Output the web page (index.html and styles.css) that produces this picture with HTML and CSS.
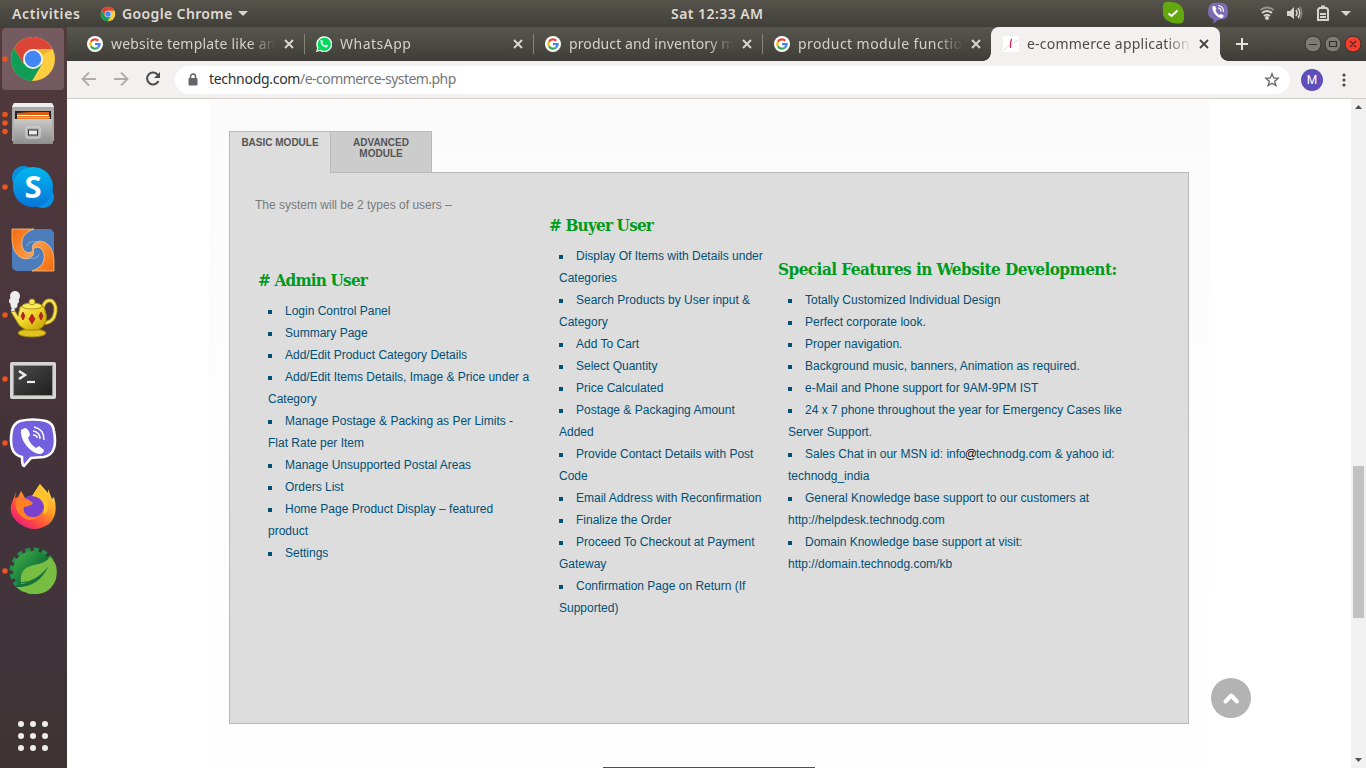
FILE: index.html
```html
<!DOCTYPE html>
<html lang="en">
<head>
<meta charset="utf-8">
<title>e-commerce application</title>
<link rel="stylesheet" href="styles.css">
</head>
<body>
<svg class="defs" width="0" height="0">
  <defs>
    <symbol id="google" viewBox="0 0 16 16">
      <circle cx="8" cy="8" r="8" fill="#fff"/>
      <g fill="none" stroke-width="2.3">
        <path d="M3.9 5.7A4.7 4.7 0 0 1 11.3 4.7" stroke="#ea4335"/>
        <path d="M3.9 10.3A4.7 4.7 0 0 1 3.9 5.7" stroke="#fbbc05"/>
        <path d="M3.9 10.3A4.7 4.7 0 0 0 11.1 11.5" stroke="#34a853"/>
        <path d="M8 8.1H12.6A4.7 4.7 0 0 1 11.1 11.5" stroke="#4285f4"/>
      </g>
    </symbol>
    <symbol id="chrome" viewBox="0 0 48 48">
      <circle cx="24" cy="24" r="22" fill="#ffcd40"/>
      <path d="M5 13A22 22 0 0 1 43.6 14H24L14 28Z" fill="#db4437"/>
      <path d="M5 13A22 22 0 0 0 23 46L33 29 24 34 14 28Z" fill="#0f9d58"/>
      <path d="M24 14H43.6L34 20Z" fill="#e8b72f"/>
      <circle cx="24" cy="24" r="10" fill="#f4f4f4"/>
      <circle cx="24" cy="24" r="8.2" fill="#4285f4"/>
    </symbol>
    <linearGradient id="steel" x1="0" y1="0" x2="0" y2="1"><stop offset="0" stop-color="#c9c9c9"/><stop offset="1" stop-color="#8e8e8e"/></linearGradient>
    <linearGradient id="sky" x1="0" y1="0" x2="0" y2="1"><stop offset="0" stop-color="#00b8f0"/><stop offset="1" stop-color="#0874d8"/></linearGradient>
    <linearGradient id="screen" x1="0" y1="0" x2="1" y2="1"><stop offset="0" stop-color="#4a4a4a"/><stop offset="1" stop-color="#202020"/></linearGradient>
    <linearGradient id="fire" x1="1" y1="0" x2=".2" y2="1"><stop offset="0" stop-color="#fff04a"/><stop offset=".45" stop-color="#ff9a26"/><stop offset=".75" stop-color="#ff4545"/><stop offset="1" stop-color="#e31587"/></linearGradient>
    <linearGradient id="leaf" x1="0" y1="0" x2="1" y2="1"><stop offset="0" stop-color="#45b649"/><stop offset=".6" stop-color="#0b6b38"/></linearGradient>
    <linearGradient id="gold" x1="0" y1="0" x2="1" y2="1"><stop offset="0" stop-color="#fff79a"/><stop offset=".5" stop-color="#f0d52a"/><stop offset="1" stop-color="#c09a00"/></linearGradient>
    <linearGradient id="orange" x1="0" y1="0" x2="1" y2="1"><stop offset="0" stop-color="#f26a0c"/><stop offset="1" stop-color="#ffa64d"/></linearGradient>
    <path id="arm" d="M12 10H34C25 13 21 19 22 26C23 34 30 36 33 31C36 37 28 43 20 38C14 34 12 26 12 20Z"/>
  </defs>
</svg>

<header class="topbar">
  <span class="activities">Activities</span>
  <svg class="app-icon" width="16" height="16"><use href="#chrome"/></svg>
  <span class="app-name">Google Chrome</span>
  <svg class="caret" width="10" height="5"><path d="M0 0H10L5 5Z" fill="#d6d4cf"/></svg>
  <span class="clock">Sat 12:33 AM</span>
  <svg class="tray" width="206" height="27" viewBox="1160 0 206 27">
    <path d="M1165 2Q1162 4 1163 10Q1162 18 1168 21Q1173 24 1179 23.500Q1184 24 1184 18Q1185 10 1180 5Q1174 1 1165 2Z" fill="#64a80f"/>
    <path d="M1168.500 13.500L1171.500 16 1177.500 10.500" fill="none" stroke="#fff" stroke-width="2"/>
    <path d="M1213 3Q1218 2 1223 3Q1228 4 1228 12Q1228 18 1224 19L1218 20 1213.500 23.500V19Q1208 18 1208 12Q1208 4 1213 3Z" fill="#7b6db4"/>
    <path d="M1213 6C1211 8 1214 15 1220 18C1222 19 1225 16 1223 15L1221 14 1219 15Q1216 13 1215.500 10L1216.500 9 1215 6Z" fill="#fff"/>
    <path d="M1218 5.500Q1223.500 6 1223.500 12M1218 8Q1221 8 1221 11.500" fill="none" stroke="#fff" stroke-width="1.200"/>
    <g fill="none" stroke="#d6d4cf" stroke-width="2"><path d="M1260.500 10Q1267 5 1273.500 10" stroke="#96948e"/><path d="M1262 13Q1267 9 1272 13M1264 16Q1267 13.500 1270 16"/></g>
    <circle cx="1267" cy="18" r="2" fill="#d6d4cf"/>
    <path d="M1287 11H1290L1294 7V19L1290 16H1287Z" fill="#d6d4cf"/>
    <path d="M1296 10Q1298 13 1296 16M1298 8Q1301.500 13 1298 18" fill="none" stroke="#d6d4cf" stroke-width="1.500"/><path d="M1300 6.500Q1303.500 13 1300 19.500" fill="none" stroke="#8a8882" stroke-width="1.300"/>
    <path d="M1321 6.500H1325M1318 9.500L1319.500 8H1326.500L1328 9.500V20H1318Z" fill="none" stroke="#d6d4cf" stroke-width="2"/><path d="M1320 14H1326M1320 17H1326" stroke="#d6d4cf" stroke-width="2"/>
    <path d="M1341 11H1351L1346 16Z" fill="#d6d4cf"/>
  </svg>
</header>

<div class="desktop">
  <nav class="dock">
    <svg width="67" height="64"><rect x="2" y="1" width="62" height="62" rx="4" fill="#735b60"/><circle class="run" cx="5" cy="32" r="2.800"/><svg x="9" y="8" width="48" height="48"><use href="#chrome"/></svg></svg>
    <svg width="67" height="64">
      <circle class="run" cx="5" cy="23.500" r="2.800"/><circle class="run" cx="5" cy="32" r="2.800"/><circle class="run" cx="5" cy="40.500" r="2.800"/>
      <path d="M14 12H52L54 16V50H12V16Z" fill="#aaa"/><path d="M14 12H52L54 16H12Z" fill="#eee"/><rect x="15" y="20" width="36" height="8" fill="#222"/>
      <path d="M17 22L30 21 49 21V28H17Z" fill="#d95d13"/><path d="M17 24.500H49" stroke="#fff" stroke-width="1"/><path d="M17 26.500H50" stroke="#f6a039" stroke-width="2"/>
      <path d="M14 28H52L53 53H13Z" fill="url(#steel)"/><rect x="26" y="36" width="14" height="11" rx="1.500" fill="#b0b0b0" stroke="#ddd"/><rect x="28.500" y="39" width="9" height="5" fill="#eee" stroke="#333"/>
    </svg>
    <svg width="67" height="64"><circle class="run" cx="5" cy="32" r="2.800"/><circle cx="23.500" cy="22.500" r="11.500" fill="#078fd8"/><circle cx="43" cy="42" r="11" fill="#0790e0"/><circle cx="33" cy="32" r="20" fill="url(#sky)"/><text class="skype" x="33" y="43" text-anchor="middle">S</text></svg>
    <svg width="67" height="64"><rect x="12" y="10" width="42" height="42" rx="5" fill="#4c7cba"/><g fill="url(#orange)" stroke="#ffc184" stroke-width=".8"><use href="#arm"/><use href="#arm" transform="rotate(180 33 31)"/></g><path d="M27 27C28 22 35 21 38 25M39 35C38 40 31 41 28 37" fill="none" stroke="#8fb0d8" stroke-width="1"/></svg>
    <svg width="67" height="64"><circle class="run" cx="5" cy="32" r="2.800"/>
      <g fill="#eee"><circle cx="15" cy="13" r="5"/><circle cx="12" cy="18" r="3"/><circle cx="16" cy="18" r="3"/><circle cx="14" cy="22" r="3.500"/><circle cx="13" cy="27" r="2"/></g>
      <path d="M43 24Q45 16 52 18Q58 23 54 34Q51 40 43 40" fill="none" stroke="#ab8d09" stroke-width="4"/><path d="M43 24Q45 16 52 18Q58 23 54 34Q51 40 43 40" fill="none" stroke="#f3df52" stroke-width="2.500"/>
      <ellipse cx="32" cy="50" rx="14" ry="4" fill="#e2c21e" stroke="#9e8608"/><path d="M11 29L15 28 18 33 20 24Q32 17 44 24Q51 41 38 47H26Q18 43 16 37Z" fill="url(#gold)" stroke="#9e8608"/><ellipse cx="32" cy="23" rx="10" ry="3" fill="#f9ec62" stroke="#b39910"/><circle cx="32" cy="19" r="3" fill="#f7e658" stroke="#b39910"/>
      <path d="M32 31L35 36 32 41 29 36ZM23 29L25 33 23 37 21 33ZM41 29L43 33 41 37 39 33Z" fill="#c81b25" stroke="#831111" stroke-width=".6"/>
    </svg>
    <svg width="67" height="64"><circle class="run" cx="5" cy="32" r="2.800"/><rect x="10" y="15" width="46" height="37" rx="2" fill="#d5d5d3"/><rect x="13" y="18" width="40" height="31" fill="#989896"/><rect x="14" y="19" width="38" height="29" fill="url(#screen)"/><path d="M19 24L25 28 19 32" fill="none" stroke="#eee" stroke-width="2.500"/><path d="M27 35H35" stroke="#eee" stroke-width="2.200"/></svg>
    <svg width="67" height="64"><circle class="run" cx="5" cy="32" r="2.800"/><path d="M20 10Q33 7 46 10Q53 12 54 20Q56 31 54 37Q52 44 44 46L31 47 24 55Q22 55 22 46Q14 44 12 37Q10 29 12 19Q14 12 20 10Z" fill="#7360df" stroke="#fff" stroke-width="2.600"/><path d="M21 19L25 17Q29 18 30 24L28 27Q30 33 36 37L39 35 44 39Q44 42 40 43C32 43 20 31 21 19Z" fill="#fff"/><path d="M34 16Q44 18 44 29M33 20Q40 21 40 28M33 24Q37 24 37 27" fill="none" stroke="#fff" stroke-width="1.400"/></svg>
    <svg width="67" height="64"><path d="M16 17L15 23 18 22 21 16 25 23 32 21 40 9 48 18 48 14 52 24 54 22Q59 40 49 49Q34 59 20 49Q6 39 13 25Z" fill="url(#fire)"/><circle cx="33" cy="31" r="11" fill="#7a41cf"/><path d="M17 24Q25 21 33 28Q31 31 24 32Q22 38 29 42Q39 44 43 38Q31 51 20 40Q13 32 17 24Z" fill="#ff8125"/><path d="M32 21L40 9Q46 22 48 28Q50 35 44 40V31Q42 22 32 21Z" fill="#ffc22b"/></svg>
    <svg width="67" height="64"><circle class="run" cx="5" cy="32" r="2.800"/><circle cx="33" cy="32" r="21" fill="none" stroke="#229046" stroke-width="5" stroke-dasharray="5 3.250"/><circle cx="33" cy="32" r="20" fill="url(#leaf)"/><path d="M50 18Q59 25 56 40Q51 54 37 55Q26 56 16 48Q41 47 48 28Q35 44 21 43Q19 29 34 26Q46 24 50 18Z" fill="#78be43"/><path d="M21 44Q35 45 48 28Q43 52 25 52Z" fill="#78be43"/><path d="M16 48Q38 49 48 28Q35 44 16 46Z" fill="#16713a"/></svg>
    <svg class="apps" width="67" height="67"><g fill="#efeded"><circle cx="21" cy="21" r="3"/><circle cx="33" cy="21" r="3"/><circle cx="45" cy="21" r="3"/><circle cx="21" cy="33" r="3"/><circle cx="33" cy="33" r="3"/><circle cx="45" cy="33" r="3"/><circle cx="21" cy="45" r="3"/><circle cx="33" cy="45" r="3"/><circle cx="45" cy="45" r="3"/></g></svg>
  </nav>

  <main class="browser">
    <div class="tabs">
      <div class="tab"><svg width="16" height="16"><use href="#google"/></svg><span class="title t1">website template like an</span><svg class="close" width="10" height="10"><path d="M1 1L9 9M9 1L1 9"/></svg></div>
      <div class="tab"><svg width="16" height="16" viewBox="0 0 16 16"><path d="M0 16L1.200 12A8 8 0 1 1 4 15Z" fill="#fff"/><path d="M1.500 14.500L2.500 11.500A6.600 6.600 0 1 1 4.500 13.700Z" fill="#00d95a"/><path d="M5 4C3 6 7 12 11 11.500L12 9.500 10 8.500 9 9.500Q7 8.500 6.300 7L7 6 6.200 4Z" fill="#fff"/></svg><span class="title t2">WhatsApp</span><svg class="close" width="10" height="10"><path d="M1 1L9 9M9 1L1 9"/></svg></div>
      <div class="tab"><svg width="16" height="16"><use href="#google"/></svg><span class="title t3">product and inventory m</span><svg class="close" width="10" height="10"><path d="M1 1L9 9M9 1L1 9"/></svg></div>
      <div class="tab last"><svg width="16" height="16"><use href="#google"/></svg><span class="title t4">product module functio</span><svg class="close" width="10" height="10"><path d="M1 1L9 9M9 1L1 9"/></svg></div>
      <div class="tab active"><svg width="16" height="16"><rect width="16" height="16" fill="#fff"/><path d="M1 14L7 9 15 4" stroke="#ddd" fill="none"/><path d="M8.500 3L7.500 7V12" stroke="#ed174b" stroke-width="1.200" fill="none"/></svg><span class="title t5">e-commerce application</span><svg class="close" width="10" height="10"><path d="M1 1L9 9M9 1L1 9"/></svg></div>
      <svg class="plus" width="12" height="12"><path d="M6 0V12M0 6H12" stroke="#e4e2dc" stroke-width="2"/></svg>
      <svg class="window-buttons" width="60" height="20">
        <g stroke="#35342f"><circle cx="10" cy="10" r="8" fill="#7d7b73"/><circle cx="30" cy="10" r="8" fill="#7d7b73"/><circle cx="50" cy="10" r="8" fill="#f63c2c"/></g>
        <path d="M6 10.500H14M26.500 7.500H33.500V12.500H26.500ZM47 7L53 13M53 7L47 13" stroke="#33322e" stroke-width="1.200" fill="none"/>
      </svg>
    </div>
    <div class="toolbar">
      <svg class="nav-icons" width="100" height="37" viewBox="67 61 100 37"><g fill="none" stroke-width="1.800"><path d="M96 79H83M89 72.500L82.500 79 89 85.500M114 79H127M121 72.500L127.500 79 121 85.500" stroke="#adadac"/><path d="M158 75A6 6 0 1 0 158.500 81" stroke="#4a4b4d" stroke-width="2"/></g><path d="M160 72V78H154Z" fill="#4a4b4d"/></svg>
      <div class="address">
        <svg width="10" height="13"><path d="M2.500 6V3.500A2.500 2.500 0 0 1 7.500 3.500V6" fill="none" stroke="#636468" stroke-width="1.500"/><rect x=".5" y="5" width="9" height="7.500" rx="1" fill="#636468"/></svg>
        <span class="url"><b>technodg.com</b>/e-commerce-system.php</span>
        <svg class="star" width="16" height="16" viewBox="0 0 16 16"><path d="M8 1.800L9.700 6 14.200 6.300 10.700 9.200 11.900 13.600 8 11.200 4.100 13.600 5.300 9.200 1.800 6.300 6.300 6Z" fill="none" stroke="#636468" stroke-width="1.300"/></svg>
      </div>
      <span class="avatar">M</span>
      <svg class="dots" width="4" height="14" fill="#4a4b4d"><circle cx="2" cy="2" r="1.600"/><circle cx="2" cy="7" r="1.600"/><circle cx="2" cy="12" r="1.600"/></svg>
    </div>

    <div class="viewport">
      <div class="page">
        <div class="module-tabs"><div class="module current">BASIC MODULE</div><div class="module">ADVANCED<br>MODULE</div></div>
        <section class="panel">
          <div class="col admin">
            <p>The system will be 2 types of users –</p>
            <h2># Admin User</h2>
            <ul>
              <li>Login Control Panel</li><li>Summary Page</li><li>Add/Edit Product Category Details</li><li>Add/Edit Items Details, Image &amp; Price under a<br>Category</li><li>Manage Postage &amp; Packing as Per Limits -<br>Flat Rate per Item</li><li>Manage Unsupported Postal Areas</li><li>Orders List</li><li>Home Page Product Display – featured<br>product</li><li>Settings</li>
            </ul>
          </div>
          <div class="col buyer">
            <h2># Buyer User</h2>
            <ul>
              <li>Display Of Items with Details under<br>Categories</li><li>Search Products by User input &amp;<br>Category</li><li>Add To Cart</li><li>Select Quantity</li><li>Price Calculated</li><li>Postage &amp; Packaging Amount<br>Added</li><li>Provide Contact Details with Post<br>Code</li><li>Email Address with Reconfirmation</li><li>Finalize the Order</li><li>Proceed To Checkout at Payment<br>Gateway</li><li>Confirmation Page on Return (If<br>Supported)</li>
            </ul>
          </div>
          <div class="col special">
            <h2>Special Features in Website Development:</h2>
            <ul>
              <li>Totally Customized Individual Design</li><li>Perfect corporate look.</li><li>Proper navigation.</li><li>Background music, banners, Animation as required.</li><li>e-Mail and Phone support for 9AM-9PM IST</li><li>24 x 7 phone throughout the year for Emergency Cases like<br>Server Support.</li><li>Sales Chat in our MSN id: info<span class="at">@</span>technodg.com &amp; yahoo id:<br>technodg_india</li><li>General Knowledge base support to our customers at<br>http://helpdesk.technodg.com</li><li>Domain Knowledge base support at visit:<br>http://domain.technodg.com/kb</li>
            </ul>
          </div>
        </section>
        <div class="next-block"></div>
      </div>
      <svg class="to-top" width="40" height="40"><circle cx="20" cy="20" r="20" fill="#b3b3b3"/><path d="M14.500 23.500L20.300 17.500 26 23.500" fill="none" stroke="#fff" stroke-width="4" stroke-linecap="round" stroke-linejoin="round"/></svg>
      <div class="scrollbar"><svg width="15" height="16"><path d="M4 10L7.500 6 11 10Z" fill="#505050"/></svg><div class="thumb"></div><svg width="15" height="16"><path d="M4 6H11L7.500 10Z" fill="#505050"/></svg></div>
    </div>
  </main>
</div>
</body>
</html>
```
FILE: styles.css
```css
* { box-sizing: border-box; }
body { margin: 0; width: 1366px; height: 768px; overflow: hidden; background: #fff; font: 12px/22px "Liberation Sans", Arial, sans-serif; }
svg { display: block; flex: none; }
.defs { position: absolute; }
.topbar { position: relative; display: flex; align-items: center; height: 27px; padding-left: 12px; background: linear-gradient(#56534b, #403f39); color: #dfdbd2; font: 600 14px/27px "Noto Sans", sans-serif; white-space: nowrap; }
.activities { width: 88px; letter-spacing: .6px; }
.app-icon { margin-right: 6px; }
.app-name { width: 116px; letter-spacing: .37px; }
.clock { position: absolute; left: 671px; letter-spacing: .45px; }
.tray { margin-left: auto; }
.desktop { display: flex; height: 741px; }
.dock { display: flex; flex-direction: column; width: 67px; flex: none; background: linear-gradient(#523a3d, #45333a 55%, #41343a 83%, #403334); }
.run { fill: #e95420; }
.skype { font: bold 31px "Open Sans", sans-serif; fill: #fff; }
.apps { margin-top: auto; margin-bottom: -2px; }
.browser { display: flex; flex-direction: column; flex: 1; min-width: 0; }
.tabs { position: relative; display: flex; height: 34px; padding-left: 9px; background: linear-gradient(#57564e, #3e3d37); }
.tab { position: relative; display: flex; align-items: center; width: 229px; padding: 0 11px; color: #d5d2c9; }
.tab:not(.last):not(.active)::after { content: ""; position: absolute; right: 0; top: 7px; width: 1px; height: 20px; background: #85847b; }
.title { width: 165px; margin: 0 8px 0 8px; overflow: hidden; white-space: nowrap; font: 14px/20px "Noto Sans", sans-serif; -webkit-mask-image: linear-gradient(90deg, #000 84%, transparent); mask-image: linear-gradient(90deg, #000 84%, transparent); }
.t1 { letter-spacing: .2px; }
.t2 { letter-spacing: .5px; }
.t3 { letter-spacing: .1px; }
.t4 { letter-spacing: .42px; }
.t5 { letter-spacing: .22px; }
.close path { fill: none; stroke: #dcd9d0; stroke-width: 1.8; }
.tab.active { width: 229px; margin-left: -1px; padding-left: 12px; background: #f2f1f0; border-radius: 8px 8px 0 0; color: #4c4c4c; }
.tab.active .title { margin-right: 7px; }
.tab.active::before, .tab.active::after { content: ""; position: absolute; bottom: 0; width: 8px; height: 8px; }
.tab.active::before { left: -8px; background: radial-gradient(circle at 0 0, transparent 7.5px, #f2f1f0 8px); }
.tab.active::after { right: -8px; background: radial-gradient(circle at 100% 0, transparent 7.5px, #f2f1f0 8px); }
.tab.active .close path { stroke: #444; }
.plus { margin: 11px 0 0 16px; }
.window-buttons { margin: 7px 3px 0 auto; }
.toolbar { display: flex; align-items: center; height: 38px; background: #f2f1f0; border-bottom: 1px solid #d0cfce; }
.address { display: flex; align-items: center; width: 1115px; height: 28px; margin-left: 8px; padding: 0 10px 0 13px; border-radius: 14px; background: #fff; }
.url { margin-left: 11px; margin-top: -2px; color: #74767a; font: 14px/20px "Noto Sans", sans-serif; letter-spacing: -.46px; white-space: nowrap; }
.url b { color: #303236; font-weight: 400; letter-spacing: -.3px; }
.url { letter-spacing: -.55px; }
.star { margin-left: auto; }
.avatar { width: 22px; height: 22px; margin-left: 11px; border-radius: 50%; background: #5f4fba; color: #fff; font: 12px/22px Roboto, sans-serif; text-align: center; }
.dots { margin-left: 19px; }
.viewport { position: relative; display: flex; flex: 1; min-height: 0; padding-left: 142px; background: #fff; overflow: hidden; }
.page { width: 1000px; padding: 32px 20px 0; background: linear-gradient(#fbfbfb, #fefefe 90%); }
.module-tabs { display: flex; height: 42px; margin-bottom: -1px; position: relative; }
.module { width: 102px; padding: 5px 0 0; border: 1px solid #b9b9b9; background: #ccc; color: #555; font: bold 10px/11px "Liberation Sans", Arial, sans-serif; text-align: center; }
.module.current { background: #ddd; border-bottom: 0; border-right: 0; width: 101px; }
.panel { display: flex; width: 960px; height: 552px; padding: 21px 0 0 28px; background: #ddd; border: 1px solid #b9b9b9; color: #005075; }
.col { white-space: nowrap; flex: none; }
.admin { width: 291px; }
.buyer { width: 229px; padding-top: 20px; }
.special { padding-top: 64px; }
.admin p { margin: 0 0 53px -3px; color: #7b7b7b; }
h2 { margin: 0 0 9px; height: 22px; color: #009a1c; font: bold 17px/22px "DejaVu Serif Condensed", "DejaVu Serif", serif; letter-spacing: -.82px; }
.special h2 { letter-spacing: -.54px; }
ul { margin: 0; padding: 0 0 0 10px; list-style: none; }
li::before { content: ""; display: inline-block; width: 4px; height: 4px; margin-right: 13px; vertical-align: 1px; background: #005075; }
.at { margin: 0 -1px; color: #000; font-size: 12px; text-shadow: 0 0 1px #fff; }
.next-block { width: 212px; height: 10px; margin: 43px 0 0 374px; background: #4c4d55; }
.to-top { position: absolute; left: 1144px; top: 579px; }
.scrollbar { display: flex; flex-direction: column; width: 15px; margin-left: auto; background: #f1f1f1; }
.thumb { width: 11px; height: 152px; margin: 351px 2px auto; background: #c1c1c1; }
```
